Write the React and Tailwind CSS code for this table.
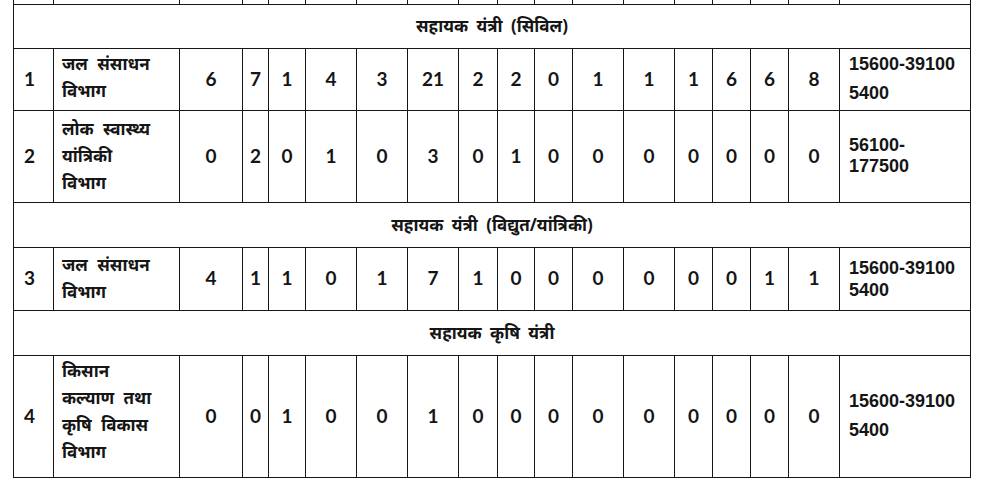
import React from "react";

const widths = [40, 126, 63, 26, 37, 51, 51, 51, 39, 37, 38, 51, 51, 38, 38, 38, 51, 131];

const rows = [
  { type: "head", title: "सहायक यंत्री (सिविल)", h: "h-[44px]" },
  {
    type: "data",
    h: "h-[62px]",
    sn: "1",
    dept: ["जल संसाधन", "विभाग"],
    vals: ["6", "7", "1", "4", "3", "21", "2", "2", "0", "1", "1", "1", "6", "6", "8"],
    pay: ["15600-39100", "5400"],
    payLead: "leading-[29px]",
    deptPad: "pb-[4px]",
  },
  {
    type: "data",
    h: "h-[92px]",
    sn: "2",
    dept: ["लोक स्वास्थ्य", "यांत्रिकी", "विभाग"],
    vals: ["0", "2", "0", "1", "0", "3", "0", "1", "0", "0", "0", "0", "0", "0", "0"],
    pay: ["56100-", "177500"],
    payLead: "leading-[21px]",
    deptPad: "pb-[2px]",
  },
  { type: "head", title: "सहायक यंत्री (विद्युत/यांत्रिकी)", h: "h-[45px]" },
  {
    type: "data",
    h: "h-[63px]",
    sn: "3",
    dept: ["जल संसाधन", "विभाग"],
    vals: ["4", "1", "1", "0", "1", "7", "1", "0", "0", "0", "0", "0", "0", "1", "1"],
    pay: ["15600-39100", "5400"],
    payLead: "leading-[22px]",
    deptPad: "pb-[2px]",
  },
  { type: "head", title: "सहायक कृषि यंत्री", h: "h-[45px]" },
  {
    type: "data",
    h: "h-[122px]",
    sn: "4",
    dept: ["किसान", "कल्याण तथा", "कृषि विकास", "विभाग"],
    vals: ["0", "0", "1", "0", "0", "1", "0", "0", "0", "0", "0", "0", "0", "0", "0"],
    pay: ["15600-39100", "5400"],
    payLead: "leading-[29px]",
    deptPad: "pb-[10px]",
  },
];

const cell = "border-[1.5px] border-[#161616] p-0 align-middle";

export default function App() {
  return (
    <div className="w-[991px] h-[487px] bg-white overflow-hidden pl-[13px] text-[#151515]">
      <table className="table-fixed border-collapse w-[957px]">
        <colgroup>
          {widths.map((w, i) => (
            <col key={i} style={{ width: w }} />
          ))}
        </colgroup>
        <tbody>
          {/* cut-off row from previous page part */}
          <tr className="h-[4px]">
            {widths.map((w, i) => (
              <td key={i} className="border-x-[1.5px] border-b-[1.5px] border-[#161616] p-0 h-[4px] leading-[0]"></td>
            ))}
          </tr>
          {rows.map((r, ri) =>
            r.type === "head" ? (
              <tr key={ri} className={r.h}>
                <td
                  colSpan={widths.length}
                  className={`${cell} text-center font-bold text-[17px] [word-spacing:4px] font-['Noto_Sans','Liberation_Sans',sans-serif]`}
                >
                  {r.title}
                </td>
              </tr>
            ) : (
              <tr key={ri} className={r.h}>
                <td className={`${cell} pl-[10px] font-bold text-[19px] font-['Lato','Liberation_Sans',sans-serif]`}>
                  {r.sn}
                </td>
                <td className={`${cell} pl-[8px] ${r.deptPad} font-bold text-[17px] leading-[27px] [word-spacing:5px] font-['Noto_Sans','Liberation_Sans',sans-serif]`}>
                  {r.dept.map((d, i) => (
                    <div key={i}>{d}</div>
                  ))}
                </td>
                {r.vals.map((v, i) => (
                  <td key={i} className={`${cell} text-center font-bold text-[19px] font-['Lato','Liberation_Sans',sans-serif]`}>
                    {v}
                  </td>
                ))}
                <td className={`${cell} pl-[9px] font-bold text-[18px] ${r.payLead} font-['Liberation_Sans',Arial,sans-serif]`}>
                  {r.pay.map((p, i) => (
                    <div key={i}>{p}</div>
                  ))}
                </td>
              </tr>
            )
          )}
        </tbody>
      </table>
    </div>
  );
}
